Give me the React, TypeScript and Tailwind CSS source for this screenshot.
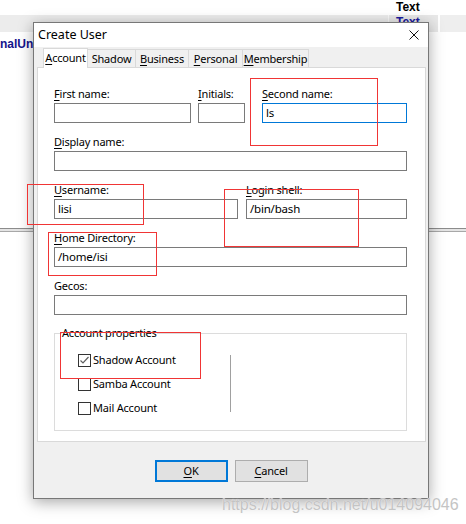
import React from 'react';

const ui = "font-['Noto_Sans',sans-serif] text-[11px] tracking-[-0.2px] text-black";

const Key = ({ k, rest }: { k: string; rest: string }) => (
  <span>
    <u className="underline decoration-1 underline-offset-[2px]">{k}</u>
    {rest}
  </span>
);

const Field = ({ label, value, width, focus, className = '' }: any) => (
  <div className={`flex flex-col ${className}`} style={{ width }}>
    <div className="leading-[16px] h-[16px] whitespace-nowrap">{label}</div>
    <div
      className={`mt-[1px] h-[20px] bg-white px-[3px] text-[11.5px] leading-[18px] border ${focus ? 'border-[#0078d7]' : 'border-[#7a7a7a]'}`}
    >
      {value}
    </div>
  </div>
);

const Check = ({ checked, label }: { checked?: boolean; label: string }) => (
  <div className="h-[24px] flex items-center">
    <div className="w-[13px] h-[13px] border border-[#333] bg-white flex items-center justify-center">
      {checked && (
        <svg width="11" height="11" viewBox="0 0 11 11">
          <polyline points="1.5,5.5 4,8 9.5,2" fill="none" stroke="#606060" strokeWidth="1.2" />
        </svg>
      )}
    </div>
    <span className="ml-[2px] leading-[16px]">{label}</span>
  </div>
);

const Tab = ({ children, w, active }: any) => (
  <div
    className={
      active
        ? 'h-[20px] -mb-px bg-white border border-b-0 border-[#d9d9d9] relative z-10 flex items-start justify-center pt-[1px]'
        : 'h-[18px] bg-[#f0f0f0] border border-b-0 border-l-0 border-[#d9d9d9] flex items-center justify-center'
    }
    style={{ width: w }}
  >
    <span className="leading-[16px] whitespace-nowrap">{children}</span>
  </div>
);

export default function App() {
  return (
    <div className="relative w-[466px] h-[524px] bg-white overflow-hidden font-['Liberation_Sans',sans-serif]">
      {/* app behind the dialog */}
      <div className="flex flex-col">
        <div className="h-[15px] pl-[396px] text-[12px] font-bold leading-[15px] text-black">Text</div>
        <div className="h-[17px] bg-[#ececec] flex">
          <div className="w-[389px] border-r border-[#f8f8f8]" />
          <div className="w-[49px] bg-[#e8e8e8] pl-[7px] text-[12px] font-bold leading-[14px] text-[#1b1b9e]">Text</div>
          <div className="w-[2px] bg-white" />
          <div className="flex-1 bg-[#eeeeee]" />
        </div>
        <div className="h-[19px] mt-[3px] text-[12px] font-bold leading-[19px] text-[#14148c] whitespace-nowrap">nalUni</div>
        <div className="mt-[174px] border-t border-[#8c8c8c]" />
        <div className="h-[2px] bg-[#e4e4e4]" />
        <div className="border-t border-[#a8a8a8]" />
      </div>

      {/* dialog window */}
      <div className={`absolute left-[33px] top-[22px] w-[396px] h-[477px] border border-[#777] bg-[#f0f0f0] shadow-[0_3px_14px_rgba(0,0,0,0.35)] flex flex-col ${ui}`}>
        <div className="h-[24px] bg-white flex items-center justify-between pl-[4px] pr-[9px]">
          <span className="text-[12.5px] tracking-normal leading-[24px]">Create User</span>
          <svg width="10" height="10" viewBox="0 0 10 10">
            <path d="M0.5 0.5 L9.5 9.5 M9.5 0.5 L0.5 9.5" stroke="#111" strokeWidth="1" />
          </svg>
        </div>

        <div className="mt-[1px] pl-[9px] flex items-end">
          <Tab w={45} active><Key k="A" rest="ccount" /></Tab>
          <Tab w={48}>Shadow</Tab>
          <Tab w={53}><Key k="B" rest="usiness" /></Tab>
          <Tab w={54}><Key k="P" rest="ersonal" /></Tab>
          <Tab w={66}><Key k="M" rest="embership" /></Tab>
        </div>

        <div className="ml-[3px] w-[389px] h-[375px] border border-[#d9d9d9] bg-white pt-[18px] pl-[16px] flex flex-col">
          <div className="flex">
            <Field width={137} label={<Key k="F" rest="irst name:" />} />
            <Field width={47} className="ml-[7px]" label={<Key k="I" rest="nitials:" />} />
            <Field width={145} className="ml-[17px]" focus value="ls" label={<Key k="S" rest="econd name:" />} />
          </div>
          <Field width={353} className="mt-[11px]" label={<Key k="D" rest="isplay name:" />} />
          <div className="flex mt-[11px]">
            <Field width={184} value="lisi" label={<Key k="U" rest="sername:" />} />
            <Field width={161} className="ml-[8px]" value="/bin/bash" label={<Key k="L" rest="ogin shell:" />} />
          </div>
          <Field width={353} className="mt-[11px]" value="/home/isi" label={<Key k="H" rest="ome Directory:" />} />
          <Field width={353} className="mt-[11px]" label="Gecos:" />

          <div className="relative mt-[18px] w-[353px] h-[98px] border border-[#dcdcdc]">
            <span className="absolute -top-[9px] left-[7px] bg-white leading-[16px]">Account properties</span>
            <div className="flex pt-[14px]">
              <div className="w-[175px] pl-[23px] flex flex-col">
                <Check checked label="Shadow Account" />
                <Check label="Samba Account" />
                <Check label="Mail Account" />
              </div>
              <div className="w-px h-[57px] mt-[7px] bg-[#a0a0a0]" />
            </div>
          </div>
        </div>

        <div className="mt-[18px] flex justify-center gap-[7px]">
          <button className="w-[73px] h-[22px] border-2 border-[#0078d7] bg-[#e1e1e1] leading-[18px]">
            <Key k="O" rest="K" />
          </button>
          <button className="w-[73px] h-[22px] border border-[#adadad] bg-[#e1e1e1] leading-[20px]">
            <Key k="C" rest="ancel" />
          </button>
        </div>
      </div>

      {/* red annotation boxes */}
      <div className="absolute left-[250px] top-[78px] w-[128px] h-[68px] border border-[#f03535]" />
      <div className="absolute left-[27px] top-[184px] w-[117px] h-[41px] border border-[#f03535]" />
      <div className="absolute left-[224px] top-[189px] w-[135px] h-[58px] border border-[#f03535]" />
      <div className="absolute left-[48px] top-[232px] w-[109px] h-[44px] border border-[#f03535]" />
      <div className="absolute left-[60px] top-[332px] w-[141px] h-[47px] border border-[#f03535]" />

      {/* watermark */}
      <div className="absolute left-[222px] top-[495px] text-[16px] leading-[20px] text-[#c4c4c4] [text-shadow:0_0_1px_#ffffff] font-['Liberation_Sans',sans-serif]">
        https://blog.csdn.net/u014094046
      </div>
    </div>
  );
}
